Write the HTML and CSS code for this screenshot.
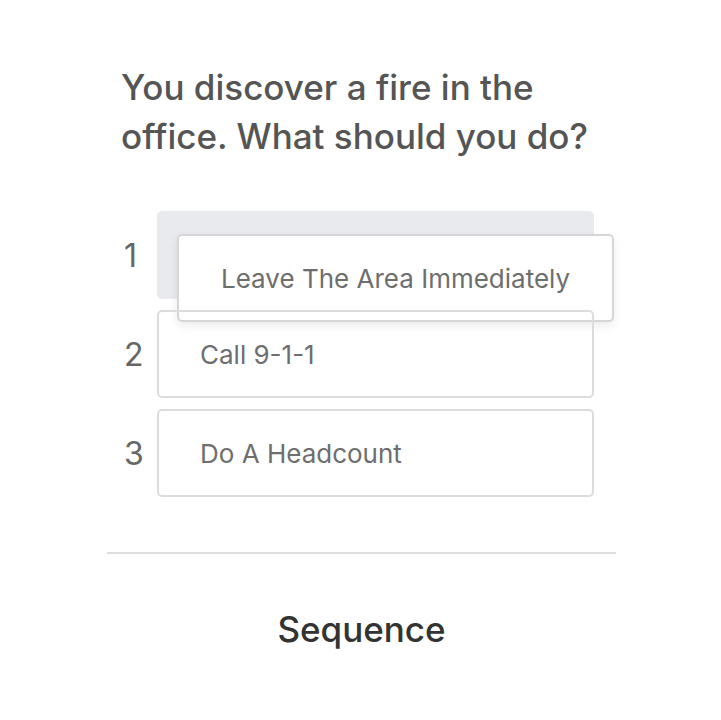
FILE: index.html
```html
<!DOCTYPE html>
<html>
<head>
    <meta charset="UTF-8">
    <title>Sequence</title>
    <link rel="stylesheet" href="styles.css">
</head>
<body>
    <div class="card">
        <h1 class="question">You discover a fire in the office. What should you do?</h1>

        <div class="steps">
            <div class="step">
                <span class="step-num">1</span>
                <div class="slot slot-empty">
                    <div class="drag-item">Leave The Area Immediately</div>
                </div>
            </div>
            <div class="step">
                <span class="step-num">2</span>
                <div class="slot">Call 9-1-1</div>
            </div>
            <div class="step">
                <span class="step-num">3</span>
                <div class="slot">Do A Headcount</div>
            </div>
        </div>

        <div class="footer">
            <span class="footer-title">Sequence</span>
        </div>
    </div>
</body>
</html>
```

FILE: styles.css
```css
body {
    margin: 0;
    background: #fff;
    font-family: Inter, 'Open Sans', sans-serif;
}
.card {
    width: 509px;
    margin-left: 107px;
    padding-top: 63px;
}
.question {
    margin: 0 0 0 14px;
    font-size: 35px;
    line-height: 49px;
    font-weight: 500;
    color: #555;
    width: 480px;
}
.steps {
    display: flex;
    flex-direction: column;
    gap: 11px;
    margin-top: 50px;
    margin-left: 15px;
}
.step {
    display: flex;
    align-items: center;
}
.step-num {
    width: 35px;
    font-size: 32px;
    color: #666;
    padding-left: 2px;
    box-sizing: border-box;
}
.slot {
    position: relative;
    display: flex;
    align-items: center;
    padding-left: 41px;
    box-sizing: border-box;
    width: 437px;
    height: 88px;
    border: 2px solid #dcdcdc;
    border-radius: 5px;
    font-size: 26px;
    color: #6e6e6e;
}
.slot-empty {
    background: #e8eaed;
    border-color: #e8eaed;
}
.drag-item {
    position: absolute;
    left: 18px;
    top: 21px;
    width: 437px;
    height: 88px;
    box-sizing: border-box;
    display: flex;
    align-items: center;
    padding-left: 42px;
    background: #fff;
    border: 2px solid #d6d6d6;
    border-radius: 5px;
    box-shadow: 0 4px 10px rgba(0,0,0,0.08);
    font-size: 26px;
    color: #6e6e6e;
}
.footer {
    margin-top: 55px;
    border-top: 2px solid #dedede;
    text-align: center;
    padding-top: 54px;
}
.footer-title {
    font-size: 35px;
    color: #333;
    font-weight: 500;
}
```
